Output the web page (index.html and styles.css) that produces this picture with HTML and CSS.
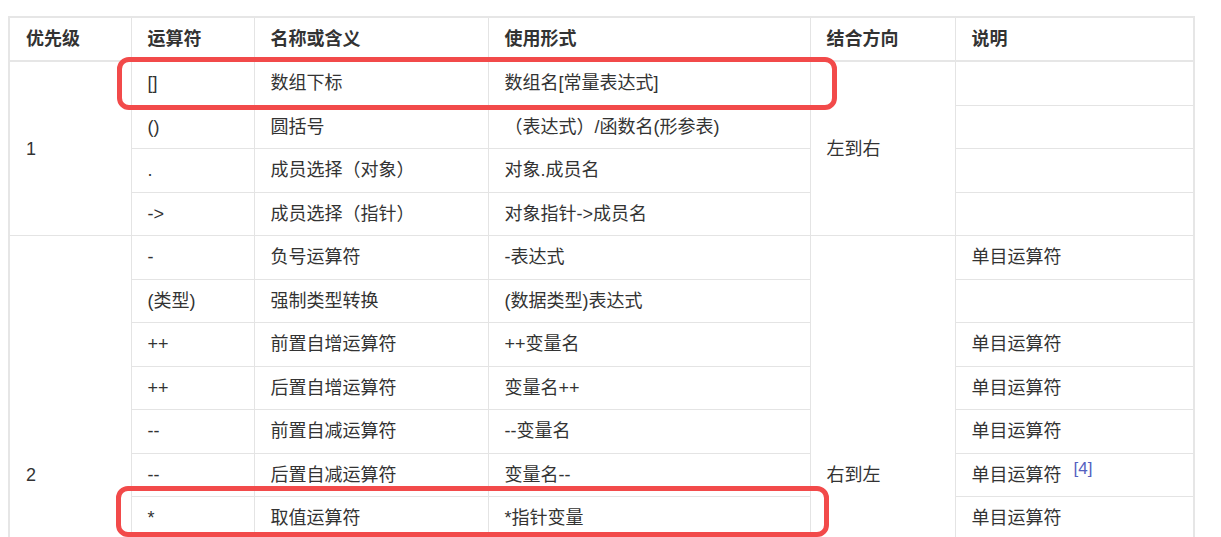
FILE: index.html
```html
<!DOCTYPE html>
<html lang="zh-CN">
<head>
<meta charset="utf-8">
<title>运算符优先级</title>
<link rel="stylesheet" href="styles.css">
</head>
<body>
<div class="wrap">
<table class="ops">
  <colgroup>
    <col class="c1"><col class="c2"><col class="c3"><col class="c4"><col class="c5"><col class="c6">
  </colgroup>
  <thead>
    <tr><th>优先级</th><th>运算符</th><th>名称或含义</th><th>使用形式</th><th>结合方向</th><th>说明</th></tr>
  </thead>
  <tbody>
    <tr><td rowspan="4">1</td><td>[]</td><td>数组下标</td><td>数组名[常量表达式]</td><td rowspan="4">左到右</td><td></td></tr>
    <tr><td>()</td><td>圆括号</td><td>（表达式）/函数名(形参表)</td><td></td></tr>
    <tr><td>.</td><td>成员选择（对象）</td><td>对象.成员名</td><td></td></tr>
    <tr><td>-&gt;</td><td>成员选择（指针）</td><td>对象指针-&gt;成员名</td><td></td></tr>
    <tr><td rowspan="11">2</td><td>-</td><td>负号运算符</td><td>-表达式</td><td rowspan="11">右到左</td><td>单目运算符</td></tr>
    <tr><td>(类型)</td><td>强制类型转换</td><td>(数据类型)表达式</td><td></td></tr>
    <tr><td>++</td><td>前置自增运算符</td><td>++变量名</td><td>单目运算符</td></tr>
    <tr><td>++</td><td>后置自增运算符</td><td>变量名++</td><td>单目运算符</td></tr>
    <tr><td>--</td><td>前置自减运算符</td><td>--变量名</td><td>单目运算符</td></tr>
    <tr><td>--</td><td>后置自减运算符</td><td>变量名--</td><td>单目运算符<sup class="ref">[4]</sup></td></tr>
    <tr><td>*</td><td>取值运算符</td><td>*指针变量</td><td>单目运算符</td></tr>
    <tr><td>&amp;</td><td>取地址运算符</td><td>&amp;变量名</td><td>单目运算符</td></tr>
    <tr><td>!</td><td>逻辑非运算符</td><td>!表达式</td><td>单目运算符</td></tr>
    <tr><td>~</td><td>按位取反运算符</td><td>~表达式</td><td>单目运算符</td></tr>
    <tr><td>sizeof</td><td>长度运算符</td><td>sizeof(表达式)</td><td></td></tr>
  </tbody>
</table>
<div class="mark mark-a"></div>
<div class="mark mark-b"></div>
</div>
</body>
</html>
```

FILE: styles.css
```css
html, body {
  margin: 0;
  padding: 0;
  background: #ffffff;
}
body {
  font-family: "Liberation Sans", "Noto Sans CJK SC", sans-serif;
  font-size: 18px;
  color: #333333;
  overflow: hidden;
}
.wrap {
  position: relative;
  padding: 16px 0 0 8px;
}
.ops {
  border-collapse: collapse;
  table-layout: fixed;
  width: 1186px;
  border: 2px solid #e6e6e6;
}
.c1 { width: 122px; }
.c2 { width: 123px; }
.c3 { width: 234px; }
.c4 { width: 322px; }
.c5 { width: 145px; }
.c6 { width: 239px; }
.ops th,
.ops td {
  border: 1px solid #e4e4e4;
  padding: 0 16px;
  text-align: left;
  vertical-align: middle;
  white-space: nowrap;
  line-height: 24px;
}
.ops th {
  height: 42px;
  font-weight: bold;
  border-bottom: 2px solid #e6e6e6;
}
.ops td {
  height: 42.5px;
}
.ref {
  font-size: 17px;
  color: #5460c0;
  margin-left: 12px;
  vertical-align: 7px;
  line-height: 0;
}
.mark {
  position: absolute;
  border: 5px solid #f24a4a;
  border-radius: 12px;
  box-sizing: border-box;
}
.mark-a {
  left: 117px;
  top: 57px;
  width: 720px;
  height: 53px;
}
.mark-b {
  left: 116px;
  top: 486px;
  width: 713px;
  height: 51px;
}
```
